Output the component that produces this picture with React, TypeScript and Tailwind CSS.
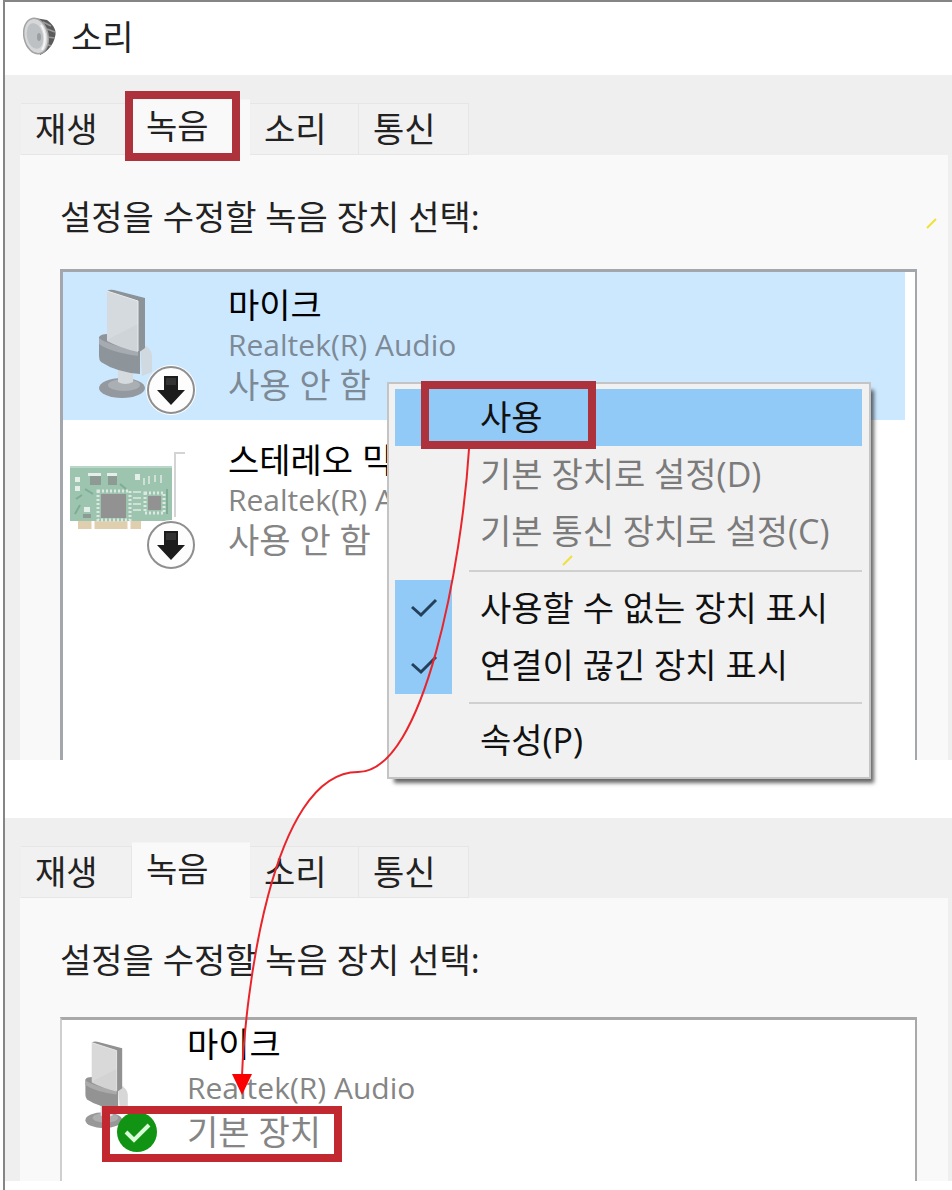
import type { ReactNode } from 'react'
import clsx from 'clsx'

const tabs = ['재생', '녹음', '소리', '통신']
const tabWidths = ['w-[111px]', 'w-[118px]', 'w-[109px]', 'w-[110px]']

function SpeakerIcon() {
  return (
    <svg width="34" height="40" viewBox="0 0 34 40" aria-hidden="true">
      <path d="M12 1 L24 3 C31 8 34 14 32 20 C30 28 25 34 17 38 Z" fill="#5a5a5a" />
      <path d="M20 5 L28 9 M24 12 L32 15 M24 20 L32 21 M23 27 L28 29" stroke="#999" strokeWidth="1.5" />
      <ellipse cx="13" cy="19" rx="12" ry="18" transform="rotate(-12 13 19)" fill="#d5d7d8" stroke="#a3a3a3" strokeWidth="1.5" />
      <ellipse cx="12" cy="19" rx="8" ry="13" transform="rotate(-12 12 19)" fill="#bdc1c3" />
      <path d="M18 8 C23 15 23 26 19 33" fill="none" stroke="#f5f5f5" strokeWidth="2" />
      <ellipse cx="16" cy="20" rx="2" ry="4" fill="#9a9ea0" />
    </svg>
  )
}

function Microphone({ transform }: { transform?: string }) {
  return (
    <g transform={transform}>
      <ellipse cx="56" cy="104" rx="23" ry="10" fill="#93999e" />
      <ellipse cx="58" cy="101" rx="16" ry="6" fill="#a9afb3" />
      <path d="M52 84 H67 V98 Q59 102 52 98 Z" fill="#d5dade" />
      <path d="M74 60 Q85 62 86 72 V88 L76 92 Z" fill="#cfd9df" />
      <path d="M41 7 Q44 5 48 6 L79 14 V64 L72 69 Z" fill="#8b9298" />
      <path d="M33 53 Q35 50 41 50 L74 61 V90 Q50 88 35 78 Q33 76 33 72 Z" fill="#8d949a" />
      <path d="M33 54 Q42 61 72 67 V72 Q44 68 33 60 Z" fill="#a5abb0" />
      <path d="M41 7 L72 17 V68 Q54 64 41 57 Z" fill="#ced4d8" />
      <path d="M41 7 L72 17 V40 L41 56 Z" fill="#d9dee1" opacity="0.6" />
      <path d="M41 7 L72 17 V67" fill="none" stroke="#e8ecee" strokeWidth="1" />
    </g>
  )
}

function SoundCard() {
  return (
    <g>
      <path d="M119 14 H109 V78" fill="none" stroke="#d4d4d4" strokeWidth="2" />
      <path d="M12 82 H75 V90 H12 Z" fill="#e0cfae" />
      <path d="M27 82 V90 M63 82 V90" stroke="#fff" strokeWidth="3" />
      <path d="M4 27 H106 V82 H4 Z" fill="#9cc4ae" />
      <path d="M4 28 H106" stroke="#b9d7c7" strokeWidth="2" />
      <g fill="#e4efe9">
        <path d="M9 38 H14 V43 H9 Z M9 47 H14 V52 H9 Z M69 35 H74 V41 H69 Z M18 68 H24 V73 H18 Z M22 34 H35 V37 H22 Z M41 34 H51 V37 H41 Z" />
      </g>
      <g fill="#8d9b94">
        <path d="M24 37 H35 V46 H24 Z M42 37 H51 V46 H42 Z M17 75 H25 V79 H17 Z" />
      </g>
      <rect x="32" y="52" width="32" height="29" fill="none" stroke="#dce9e2" strokeWidth="3" strokeDasharray="2 2" />
      <rect x="35" y="55" width="25" height="24" fill="#929292" />
      <rect x="79" y="54" width="19" height="20" fill="none" stroke="#dce9e2" strokeWidth="3" strokeDasharray="2 2" />
      <rect x="82" y="57" width="13" height="14" fill="#929292" />
      <path d="M67 53 H75 M67 59 H75 M67 65 H75 M67 71 H75 M78 39 V46 M83 37 V45 M89 36 V43 M95 36 V44" stroke="#cfe0d7" strokeWidth="2" />
      <path d="M10 60 L16 56 M19 50 L27 55 M54 45 L60 50 M101 50 V75 M9 75 L14 66" stroke="#7fac94" strokeWidth="2" />
    </g>
  )
}

function DisabledBadge() {
  return (
    <g>
      <circle cx="105" cy="106" r="25" fill="#fff" />
      <circle cx="105" cy="106" r="23" fill="#fdfdfd" stroke="#8f8f8f" strokeWidth="2" />
      <path d="M98 92 H112 V106 H119 L105 121 L91 106 H98 Z" fill="#1c1c1c" />
      <path d="M100 94 H110 V101 H100 Z" fill="#333" />
    </g>
  )
}

function Highlight({ className }: { className: string }) {
  return <span aria-hidden="true" className={clsx('pointer-events-none absolute z-10 border-8', className)} />
}

function SoundPage({ marked, gap, children }: { marked?: boolean; gap: string; children: ReactNode }) {
  return (
    <section className="bg-[#efefef] pr-1 pl-[15px]">
      <div role="tablist" className="flex h-20 items-end pl-px">
        {tabs.map((tab, index) => {
          const selected = tab === '녹음'
          return (
            <button
              key={tab}
              type="button"
              role="tab"
              aria-selected={selected}
              className={clsx(
                'relative pl-[14px] text-left leading-10',
                tabWidths[index],
                selected ? 'h-14 border-t border-[#f4f4f4] bg-[#f9f9f9] pb-1' : 'h-[52px] border border-l-0 border-[#e6e6e6] bg-[#f1f1f1]'
              )}
            >
              {tab}
              {marked && selected ? <Highlight className="-top-[9px] -bottom-[6px] -left-[7px] right-[10px] border-[#ad323b]" /> : null}
            </button>
          )
        })}
      </div>
      <div className="bg-[#f9f9f9] pr-[31px] pl-10">
        <h2 className={clsx('pt-[42px] leading-10', gap)}>설정을 수정할 녹음 장치 선택:</h2>
        {children}
      </div>
    </section>
  )
}

function DeviceText({ name, status, muted }: { name: string; status: string; muted: string }) {
  return (
    <div>
      <p className="text-black">{name}</p>
      <p className={clsx('text-[30px]', muted)}>Realtek(R) Audio</p>
      <p className={muted}>{status}</p>
    </div>
  )
}

function MenuItem({ children, disabled, checked, active }: { children: ReactNode; disabled?: boolean; checked?: boolean; active?: boolean }) {
  return (
    <button
      type="button"
      role={checked ? 'menuitemcheckbox' : 'menuitem'}
      aria-checked={checked}
      disabled={disabled}
      className={clsx(
        'relative flex h-[57px] w-full items-center text-left',
        active && 'bg-[#91c9f7]',
        disabled ? 'text-[#7b7b7b]' : 'text-[#111]'
      )}
    >
      <span className={clsx('mr-7 flex h-full w-[57px] items-center justify-center', checked && 'bg-[#91c9f7]')}>
        {checked ? (
          <svg width="28" height="22" viewBox="0 0 28 22" aria-hidden="true">
            <path d="M2 9 L11 17 L26 2" fill="none" stroke="#24405a" strokeWidth="3" />
          </svg>
        ) : null}
      </span>
      {children}
    </button>
  )
}

function ContextMenu() {
  return (
    <div
      role="menu"
      className="absolute top-[110px] left-[324px] w-[484px] border-2 border-[#c4c4c4] bg-[#f1f1f1] pt-[5px] pr-[7px] pb-2 pl-[6px] shadow-[5px_6px_4px_-2px_rgba(0,0,0,0.6)]"
    >
      <MenuItem active>
        사용
        <Highlight className="-top-2 -bottom-[3px] left-[26px] w-[175px] border-[#ad323b]" />
      </MenuItem>
      <MenuItem disabled>기본 장치로 설정(D)</MenuItem>
      <MenuItem disabled>기본 통신 장치로 설정(C)</MenuItem>
      <hr className="mt-[10px] mb-2 ml-[74px] border-t-2 border-[#d0d0d0]" />
      <MenuItem checked>사용할 수 없는 장치 표시</MenuItem>
      <MenuItem checked>연결이 끊긴 장치 표시</MenuItem>
      <hr className="my-2 ml-[74px] border-t-2 border-[#d0d0d0]" />
      <MenuItem>속성(P)</MenuItem>
    </div>
  )
}

export default function App() {
  return (
    <main className="relative min-h-screen overflow-hidden bg-white pl-[3px] font-['Open_Sans','Noto_Sans_CJK_KR',sans-serif] text-[34px] text-[#222]">
      <div className="min-h-screen border-t-2 border-l-2 border-[#858585]">
        <header className="flex h-[73px] items-center gap-[14px] pb-1 pl-[18px]">
          <SpeakerIcon />
          <h1 className="leading-10">소리</h1>
        </header>

        <SoundPage marked gap="mb-8">
          <div className="relative h-[491px] border-t-[3px] border-r-2 border-l-[3px] border-[#a3a7ab] bg-white">
            <ul role="listbox" aria-label="녹음 장치" className="pr-[10px] leading-10">
              <li role="option" aria-selected="true" className="flex bg-[#cce8ff] pt-[13px] pb-[15px]">
                <svg width="132" height="132" viewBox="0 1 132 132" className="mr-[30px] -mb-3 ml-[3px]" aria-hidden="true">
                  <Microphone />
                  <DisabledBadge />
                </svg>
                <DeviceText name="마이크" status="사용 안 함" muted="text-[#7d8a96]" />
              </li>
              <li role="option" aria-selected="false" className="mt-[7px] flex pt-[13px]">
                <svg width="132" height="132" viewBox="0 1 132 132" className="mr-[30px] ml-[3px]" aria-hidden="true">
                  <SoundCard />
                  <DisabledBadge />
                </svg>
                <DeviceText name="스테레오 믹스" status="사용 안 함" muted="text-[#858585]" />
              </li>
            </ul>
            <ContextMenu />
          </div>
        </SoundPage>

        <div className="mt-[58px]">
          <SoundPage gap="mb-[37px]">
            <div className="h-[164px] border-t-[3px] border-r-2 border-l-2 border-[#a9a9a9] border-l-[#cfcfcf] bg-white">
              <ul role="listbox" aria-label="녹음 장치" className="leading-[44px]">
                <li role="option" aria-selected="false" className="relative flex pt-[2px]">
                  <svg width="110" height="136" viewBox="0 0 110 136" className="mr-[11px] ml-1" aria-hidden="true">
                    <g className="grayscale">
                      <Microphone transform="translate(-7 15) scale(0.8)" />
                    </g>
                    <circle cx="71" cy="110" r="20" fill="#119313" />
                    <path d="M60 110 L68 118 L83 103" fill="none" stroke="#d9ffd9" strokeWidth="4" />
                  </svg>
                  <DeviceText name="마이크" status="기본 장치" muted="text-[#858585]" />
                  <Highlight className="top-[86px] left-10 h-14 w-60 border-[#c1282f]" />
                </li>
              </ul>
            </div>
          </SoundPage>
        </div>
      </div>

      <svg width="952" height="1190" viewBox="0 0 952 1190" className="pointer-events-none absolute top-0 left-0" aria-hidden="true">
        <path d="M469 449 C462 560 425 772 358 772 C270 772 245 1000 242 1076" fill="none" stroke="#e9252b" strokeWidth="2" />
        <path d="M232 1074 H252 L242 1095 Z" fill="#fb0000" />
        <path d="M927 228 L936 219 M563 565 L572 556" stroke="#f2e03a" strokeWidth="2" />
      </svg>
    </main>
  )
}
